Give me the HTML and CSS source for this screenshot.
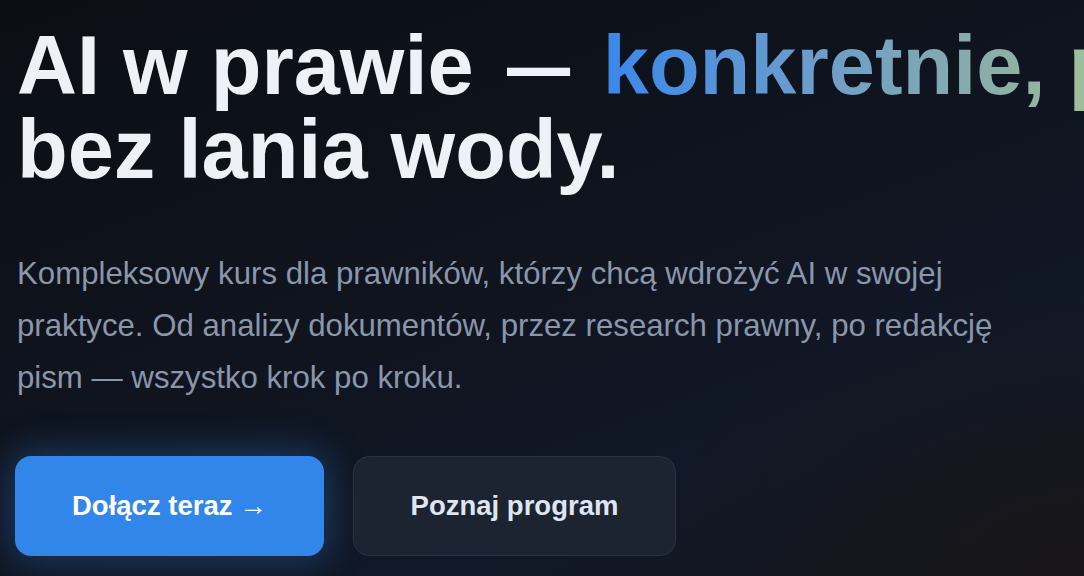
FILE: index.html
```html
<!DOCTYPE html>
<html lang="pl">
<head>
<meta charset="utf-8">
<title>AI w prawie</title>
<link rel="stylesheet" href="styles.css">
</head>
<body>
<main class="hero">
  <h1 class="hero-title">AI w prawie <span class="dash">—</span> <span class="accent">konkretnie, praktycznie,</span><br>bez lania wody.</h1>
  <p class="hero-lead">Kompleksowy kurs dla prawników, którzy chcą wdrożyć AI w swojej praktyce. Od analizy dokumentów, przez research prawny, po redakcję pism — wszystko krok po kroku.</p>
  <div class="hero-actions">
    <a class="btn btn-primary" href="#">Dołącz teraz <span class="arrow">→</span></a>
    <a class="btn btn-secondary" href="#">Poznaj program</a>
  </div>
</main>
</body>
</html>
```

FILE: styles.css
```css
html, body {
  margin: 0;
  height: 100%;
}

body {
  overflow: hidden;
  background:
    radial-gradient(ellipse 60% 70% at 100% 100%, rgba(30, 22, 18, 0.55), rgba(0,0,0,0) 70%),
    linear-gradient(160deg, #0b0e15 0%, #0f141e 45%, #111827 75%, #12161f 100%);
  font-family: "Liberation Sans", Arial, sans-serif;
  color: #eef1f7;
}

.hero {
  padding: 24px 0 0 17px;
  width: 1400px;
}

.hero-title {
  margin: 0;
  font-size: 83px;
  line-height: 84px;
  font-weight: 700;
  color: #eef1f8;
  white-space: nowrap;
}

.dash {
  display: inline-block;
  transform: scaleX(0.76);
}

.accent {
  background: linear-gradient(90deg, #3a87ea 0px, #6a9ccc 200px, #8fb1a4 420px, #a9c795 520px, #b7d27a 800px);
  -webkit-background-clip: text;
  background-clip: text;
  color: transparent;
}

.hero-lead {
  margin: 56px 0 0;
  max-width: 1010px;
  font-size: 31.2px;
  line-height: 52px;
  color: #8a96aa;
}

.hero-actions {
  display: flex;
  gap: 29px;
  margin-top: 52px;
  margin-left: -2px;
}

.btn {
  display: flex;
  align-items: center;
  justify-content: center;
  height: 100px;
  box-sizing: border-box;
  border-radius: 16px;
  font-family: "Liberation Sans", Arial, sans-serif;
  font-weight: 700;
  font-size: 27.5px;
  text-decoration: none;
}

.arrow {
  font-weight: 400;
  margin-left: 7px;
}

.btn-primary {
  width: 309px;
  background: #3386e9;
  color: #ffffff;
  box-shadow: 0 0 36px 4px rgba(51, 134, 233, 0.35);
}

.btn-secondary {
  width: 323px;
  background: #1d2431;
  border: 1px solid #2b3342;
  color: #dfe6f1;
}
```
